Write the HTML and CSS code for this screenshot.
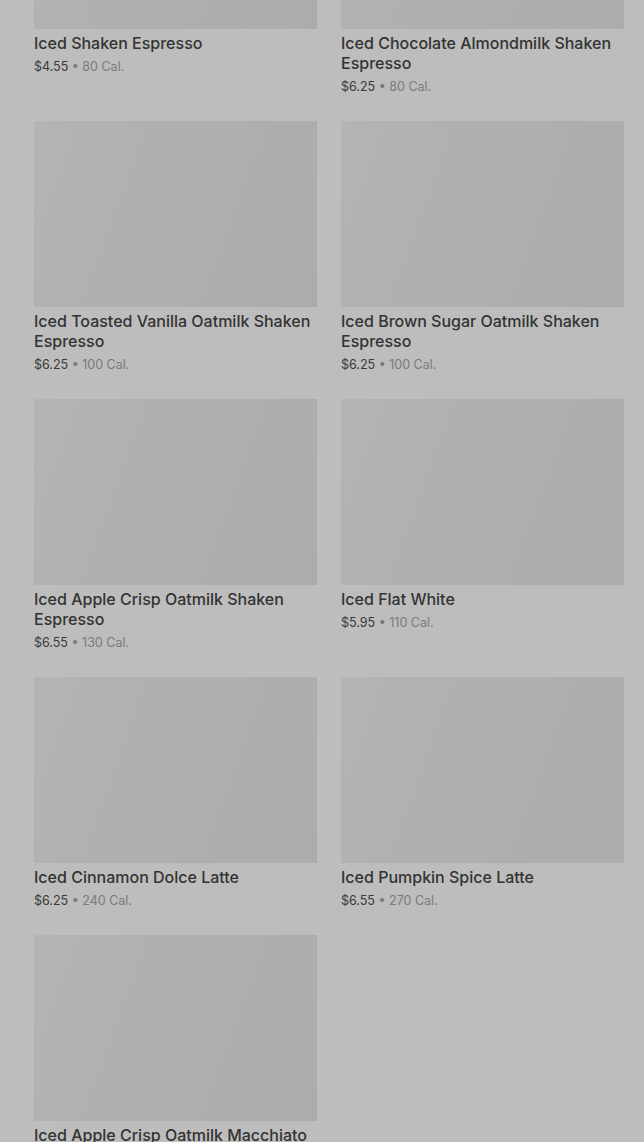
FILE: index.html
```html
<!DOCTYPE html>
<html>
<head>
    <title>Menu</title>
    <link rel="stylesheet" href="styles.css">
</head>
<body>
    <div class="menu-grid">
        <div class="item">
            <div class="item-image"></div>
            <div class="item-name">Iced Shaken Espresso</div>
            <div class="item-meta"><span class="price">$4.55</span> • 80 Cal.</div>
        </div>
        <div class="item">
            <div class="item-image"></div>
            <div class="item-name">Iced Chocolate Almondmilk Shaken Espresso</div>
            <div class="item-meta"><span class="price">$6.25</span> • 80 Cal.</div>
        </div>
        <div class="item">
            <div class="item-image"></div>
            <div class="item-name">Iced Toasted Vanilla Oatmilk Shaken Espresso</div>
            <div class="item-meta"><span class="price">$6.25</span> • 100 Cal.</div>
        </div>
        <div class="item">
            <div class="item-image"></div>
            <div class="item-name">Iced Brown Sugar Oatmilk Shaken Espresso</div>
            <div class="item-meta"><span class="price">$6.25</span> • 100 Cal.</div>
        </div>
        <div class="item">
            <div class="item-image"></div>
            <div class="item-name">Iced Apple Crisp Oatmilk Shaken Espresso</div>
            <div class="item-meta"><span class="price">$6.55</span> • 130 Cal.</div>
        </div>
        <div class="item">
            <div class="item-image"></div>
            <div class="item-name">Iced Flat White</div>
            <div class="item-meta"><span class="price">$5.95</span> • 110 Cal.</div>
        </div>
        <div class="item">
            <div class="item-image"></div>
            <div class="item-name">Iced Cinnamon Dolce Latte</div>
            <div class="item-meta"><span class="price">$6.25</span> • 240 Cal.</div>
        </div>
        <div class="item">
            <div class="item-image"></div>
            <div class="item-name">Iced Pumpkin Spice Latte</div>
            <div class="item-meta"><span class="price">$6.55</span> • 270 Cal.</div>
        </div>
        <div class="item">
            <div class="item-image"></div>
            <div class="item-name">Iced Apple Crisp Oatmilk Macchiato</div>
            <div class="item-meta"><span class="price">$6.55</span> • 140 Cal.</div>
        </div>
    </div>
</body>
</html>
```

FILE: styles.css
```css
html, body {
    height: 100%;
    overflow: hidden;
}

body {
    font-family: Inter, "Noto Sans", sans-serif;
    background-color: #bdbdbd;
    margin: 0;
    padding: 0 20px 0 34px;
}

/* page is scrolled, first row sits partly above the top */
.menu-grid {
    display: grid;
    grid-template-columns: 283px 283px;
    column-gap: 24px;
    row-gap: 24px;
    margin-top: -157px;
}

.item-image {
    height: 186px;
    background: linear-gradient(110deg, #b4b4b4 0%, #b0b0b0 35%, #acacac 100%);
}

.item-name {
    margin-top: 4px;
    font-size: 16px;
    line-height: 20px;
    font-weight: 500;
    color: #333;
}

.item-meta {
    margin-top: 4px;
    font-size: 12.5px;
    line-height: 20px;
    color: #7a7a7a;
}

.price {
    color: #3a3a3a;
}
```
